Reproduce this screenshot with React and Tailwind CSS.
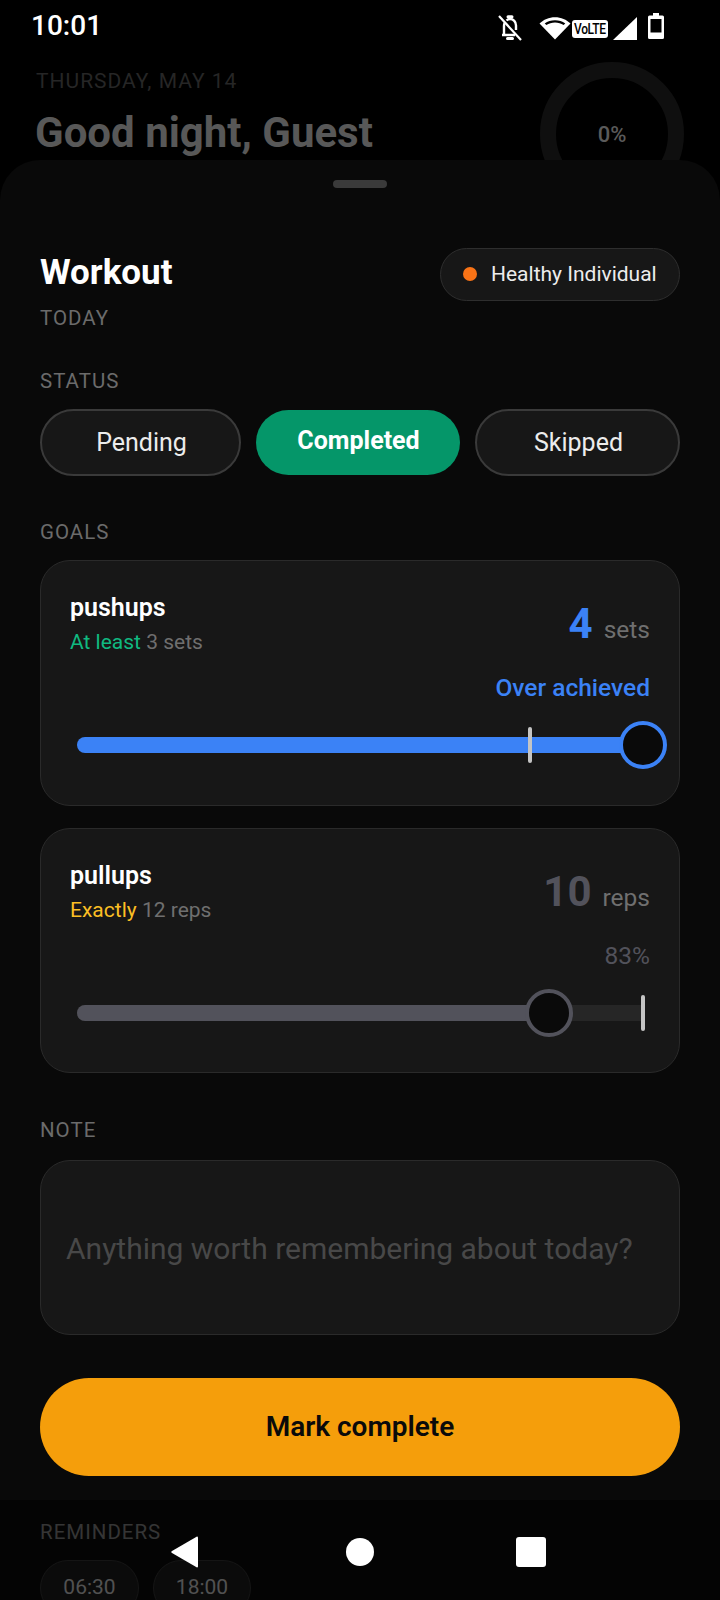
import React from "react";

function StatusIcons() {
  return (
    <div className="flex items-start">
      <svg width="24" height="26" viewBox="0 0 24 26" fill="none" stroke="white" strokeWidth="2.4" className="mt-[15px]">
        <path d="M6 19V11c0-1.2.2-2.2.7-3.1M8.5 5.5C9.4 4.6 10.6 4 12 4c3.4 0 6 2.8 6 6.5V15M4 20h13" />
        <path d="M10 1.8h4M9.5 23.5h5" strokeWidth="3" strokeLinecap="round" />
        <path d="M1 1l22 24" strokeWidth="2.2" />
      </svg>
      <svg width="32" height="23" viewBox="0 0 32 23" className="ml-[17px] mt-[17px]">
        <path d="M16 22.5L0.5 6.5C4.5 2.5 10 .2 16 .2s11.5 2.3 15.5 6.3z" fill="white" />
        <path d="M16 3.2c-3.8 0-7.4 1.1-10.3 3.2L7.4 8.1C9.8 6.5 12.8 5.6 16 5.6s6.2.9 8.6 2.5l1.7-1.7C23.4 4.3 19.8 3.2 16 3.2z" fill="black" />
      </svg>
      <div className="ml-[1px] mt-[20px] flex h-[18px] w-[36px] items-center justify-center overflow-hidden rounded-[3px] bg-white text-[15px] leading-[18px] font-medium tracking-[-0.4px] text-black">
        <span className="inline-block scale-x-[0.8]">VoLTE</span>
      </div>
      <svg width="24" height="23" viewBox="0 0 24 23" className="ml-[5px] mt-[17px]">
        <path d="M24 0v23H0z" fill="white" />
      </svg>
      <svg width="16" height="26" viewBox="0 0 16 26" className="ml-[11px] mt-[13px]">
        <path fillRule="evenodd" d="M5 0h6v2.5h3.5a1.5 1.5 0 0 1 1.5 1.5v20.5a1.5 1.5 0 0 1-1.5 1.5h-13A1.5 1.5 0 0 1 0 24.5V4a1.5 1.5 0 0 1 1.5-1.5H5zM2.5 6v13.5h11V6z" fill="white" />
      </svg>
    </div>
  );
}

function Label({ children, className = "" }) {
  return <div className={`text-[20.5px] leading-[24px] tracking-[1px] text-[#6b6b6b] ${className}`}>{children}</div>;
}

function GoalCard({ name, rule, ruleColor, target, value, valueColor, unit, status, statusClass, children, className = "" }) {
  return (
    <div className={`rounded-[30px] border border-[#2a2a2a] bg-[#171717] px-[29px] pt-[33px] ${className}`}>
      <div className="flex items-start justify-between">
        <div>
          <div className="text-[25px] leading-[28px] font-semibold text-white">{name}</div>
          <div className="mt-[8px] text-[21px] leading-[24px] text-[#6f6f6f]">
            <span className={ruleColor}>{rule}</span> {target}
          </div>
        </div>
        <div className="mt-[4px] flex items-baseline gap-[11px]">
          <span className={`text-[42px] leading-[52px] font-bold ${valueColor}`}>{value}</span>
          <span className="text-[24.5px] leading-[28px] text-[#6f6f6f]">{unit}</span>
        </div>
      </div>
      <div className={`mt-[22px] text-right leading-[24px] ${statusClass}`}>{status}</div>
      <div className="relative mt-[21px] h-[48px] w-[580px]">{children}</div>
    </div>
  );
}

export default function App() {
  return (
    <div className="relative h-[1600px] w-[720px] overflow-hidden bg-black font-[Roboto,sans-serif]">
      <div className="flex h-[56px] items-start justify-between pl-[31px] pr-[56px]">
        <span className="mt-[8px] text-[28px] leading-[36px] font-medium text-white">10:01</span>
        <StatusIcons />
      </div>

      <div className="flex h-[104px] items-start justify-between pl-[36px] pr-[36px]">
        <div>
          <div className="mt-[13px] text-[21px] leading-[24px] tracking-[1px] text-[#262626]">THURSDAY, MAY 14</div>
          <div className="-ml-[1px] mt-[15px] text-[42px] leading-[50px] font-bold text-[#585858]">Good night, Guest</div>
        </div>
        <div className="mt-[6px] flex h-[144px] w-[144px] shrink-0 items-center justify-center rounded-full border-[16px] border-[#0f0f0f]">
          <span className="text-[22px] font-medium text-[#5a5a5a]">0%</span>
        </div>
      </div>

      <div className="relative h-[1440px] rounded-t-[40px] bg-[#090909] px-[40px] pt-[20px]">
        <div className="mx-auto h-[8px] w-[54px] rounded-full bg-[#3a3a3a]" />

        <div className="mt-[60px] flex items-start justify-between">
          <div>
            <div className="pt-[1px] text-[35px] leading-[48px] font-bold text-white">Workout</div>
            <Label className="mt-[9px]">TODAY</Label>
          </div>
          <div className="flex h-[53px] w-[240px] items-center rounded-full border border-[#2e2e2e] bg-[#171717] pb-[1px] pl-[22px]">
            <span className="h-[14px] w-[14px] rounded-full bg-[#f97316]" />
            <span className="ml-[14px] text-[21px] leading-[24px] text-[#ececec]">Healthy Individual</span>
          </div>
        </div>

        <Label className="mt-[39px]">STATUS</Label>
        <div className="mt-[16px] flex gap-[14px]">
          <div className="flex h-[67px] w-[201px] items-center justify-center rounded-full border-2 border-[#3a3a3a] bg-[#171717] pl-[2px] pt-[1px] text-[25px] text-[#ececec]">Pending</div>
          <div className="flex h-[67px] w-[206px] items-center justify-center rounded-full border border-transparent bg-[#059669] bg-clip-padding pb-[4px] pl-[1px] text-[25px] font-bold text-white">Completed</div>
          <div className="flex h-[67px] w-[205px] items-center justify-center rounded-full border-2 border-[#3a3a3a] bg-[#171717] pl-[2px] pt-[1px] text-[25px] text-[#ececec]">Skipped</div>
        </div>

        <Label className="mt-[44px]">GOALS</Label>
        <GoalCard
          className="mt-[16px] h-[246px]"
          name="pushups"
          rule="At least"
          ruleColor="text-[#10b981]"
          target="3 sets"
          value="4"
          valueColor="text-[#3b82f6]"
          unit="sets"
          status="Over achieved"
          statusClass="text-[24.5px] font-medium text-[#3b82f6]"
        >
          <div className="absolute left-[7px] top-[16px] h-[16px] w-[566px] rounded-l-full bg-[#3b82f6]" />
          <div className="absolute left-[458px] top-[6px] h-[36px] w-[4px] rounded-full bg-[#c4c4c4]" />
          <div className="absolute left-[549px] top-0 h-[48px] w-[48px] rounded-full border-[4px] border-[#3b82f6] bg-[#0a0a0a]" />
        </GoalCard>
        <GoalCard
          className="mt-[22px] h-[245px]"
          name="pullups"
          rule="Exactly"
          ruleColor="text-[#fbbf24]"
          target="12 reps"
          value="10"
          valueColor="text-[#52525b]"
          unit="reps"
          status="83%"
          statusClass="text-[24.5px] text-[#52525b]"
        >
          <div className="absolute left-[7px] top-[16px] h-[16px] w-[566px] rounded-l-full bg-[#262626]" />
          <div className="absolute left-[7px] top-[16px] h-[16px] w-[470px] rounded-l-full bg-[#52525b]" />
          <div className="absolute left-[571px] top-[6px] h-[36px] w-[4px] rounded-full bg-[#c4c4c4]" />
          <div className="absolute left-[455px] top-0 h-[48px] w-[48px] rounded-full border-[4px] border-[#52525b] bg-[#0a0a0a]" />
        </GoalCard>

        <Label className="mt-[45px]">NOTE</Label>
        <div className="mt-[18px] flex h-[175px] items-center rounded-[30px] border border-[#2a2a2a] bg-[#171717] pl-[25px] pt-[2px] text-[30px] text-[#484848]">
          Anything worth remembering about today?
        </div>

        <div className="mt-[43px] flex h-[98px] items-center justify-center rounded-full bg-[#f59e0b] text-[28px] font-semibold text-[#0a0a0a]">Mark complete</div>

        <Label className="mt-[44px]">REMINDERS</Label>
        <div className="mt-[16px] flex gap-[14px]">
          <div className="flex h-[56px] w-[99px] items-center justify-center rounded-full border border-[#2a2a2a] bg-[#171717] text-[21px] text-[#a3a3a3]">06:30</div>
          <div className="flex h-[56px] w-[98px] items-center justify-center rounded-full border border-[#2a2a2a] bg-[#171717] text-[21px] text-[#a3a3a3]">18:00</div>
        </div>
      </div>

      <div className="absolute bottom-0 left-0 right-0 flex h-[100px] items-start bg-black/50 pl-[171px] pt-[36px]">
        <svg width="27" height="32" viewBox="0 0 27 32">
          <path d="M26 .5a1 1 0 0 1 1 1v29a1 1 0 0 1-1 1L1 17a1.2 1.2 0 0 1 0-2z" fill="white" />
        </svg>
        <div className="ml-[148px] mt-[2px] h-[28px] w-[28px] rounded-full bg-white" />
        <div className="ml-[142px] mt-[1px] h-[30px] w-[30px] rounded-[3px] bg-white" />
      </div>
    </div>
  );
}
